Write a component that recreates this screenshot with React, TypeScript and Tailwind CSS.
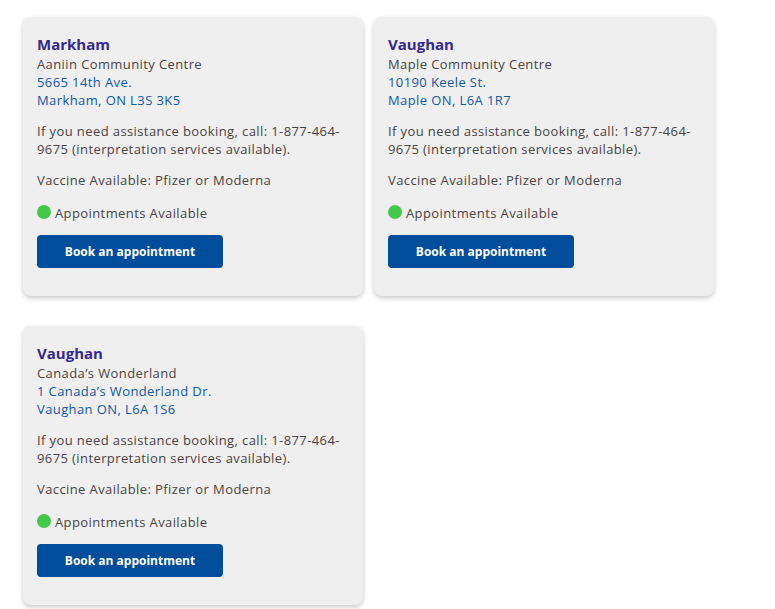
import React from "react";

/* ── Clinic card data ── */
interface Clinic {
  city: string;
  venue: string;
  street: string;
  locality: string;
}

const CLINICS: Clinic[] = [
  {
    city: "Markham",
    venue: "Aaniin Community Centre",
    street: "5665 14th Ave.",
    locality: "Markham, ON L3S 3K5",
  },
  {
    city: "Vaughan",
    venue: "Maple Community Centre",
    street: "10190 Keele St.",
    locality: "Maple ON, L6A 1R7",
  },
  {
    city: "Vaughan",
    venue: "Canada’s Wonderland",
    street: "1 Canada’s Wonderland Dr.",
    locality: "Vaughan ON, L6A 1S6",
  },
];

function ClinicCard({ clinic }: { clinic: Clinic }) {
  return (
    <div className="w-[340px] h-[279px] rounded-lg bg-[#efefef] px-[14px] pt-[17px] shadow-[0_2px_5px_rgba(0,0,0,0.22)] text-[13px] leading-[18px] tracking-[0.4px] text-[#4a4343]">
      <h3 className="text-[15px] leading-[21px] font-bold tracking-normal text-[#35298f]">
        {clinic.city}
      </h3>
      <p>{clinic.venue}</p>
      <a className="block text-[#1158a6]">{clinic.street}</a>
      <a className="block text-[#1158a6]">{clinic.locality}</a>

      <p className="mt-[13px]">
        If you need assistance booking, call: 1-877-464-9675 (interpretation
        services available).
      </p>
      <p className="mt-[13px]">Vaccine Available: Pfizer or Moderna</p>

      <div className="mt-[15px] flex items-center gap-[4px]">
        <span className="w-[14px] h-[14px] rounded-full bg-[#44c84a] -mt-[2px]" />
        <span>Appointments Available</span>
      </div>

      <button className="mt-[13px] w-[186px] h-[33px] rounded bg-[#004d9c] text-white text-[12px] font-bold tracking-normal">
        Book an appointment
      </button>
    </div>
  );
}

export default function App() {
  return (
    <div
      className="min-h-[609px] bg-white pl-[23px] pt-[17px]"
      style={{ fontFamily: "'Open Sans', 'Noto Sans', sans-serif" }}
    >
      <div className="grid grid-cols-[340px_340px] gap-x-[11px] gap-y-[30px]">
        {CLINICS.map((c, i) => (
          <ClinicCard key={i} clinic={c} />
        ))}
      </div>
    </div>
  );
}
